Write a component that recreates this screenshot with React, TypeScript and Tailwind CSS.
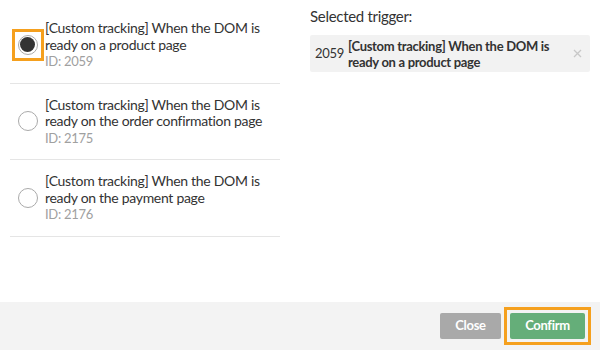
import React from "react";

const triggers = [
  { id: 2059, name: "[Custom tracking] When the DOM is ready on a product page" },
  { id: 2175, name: "[Custom tracking] When the DOM is ready on the order confirmation page" },
  { id: 2176, name: "[Custom tracking] When the DOM is ready on the payment page" },
];

function Radio({ checked }: { checked: boolean }) {
  return (
    <span className="flex h-[20px] w-[20px] shrink-0 items-center justify-center rounded-full border border-[#aaaaaa] bg-white">
      {checked && <span className="h-[15px] w-[15px] rounded-full bg-[#333333]" />}
    </span>
  );
}

export default function App() {
  const selected = triggers[0];

  return (
    <div className="flex h-[350px] w-[600px] flex-col bg-white text-[#333333] font-['Lato',sans-serif] tracking-[-0.3px]">
      <div className="flex flex-1 gap-[30px] px-[10px]">
        {/* Trigger list */}
        <div className="w-[270px] pt-[7px]">
          {triggers.map((t, i) => (
            <div
              key={t.id}
              className="flex items-center border-b border-[#e5e5e5] pt-[13px] pb-[13px]"
            >
              <div className="flex w-[35px] shrink-0 justify-center">
                {i === 0 ? (
                  <span className="flex h-[32px] w-[32px] items-center justify-center border-[3px] border-[#f5a01e]">
                    <Radio checked />
                  </span>
                ) : (
                  <Radio checked={false} />
                )}
              </div>
              <div className="text-[14px] leading-[16.5px]">
                <div>{t.name}</div>
                <div className="text-[13px] text-[#a0a0a0]">ID: {t.id}</div>
              </div>
            </div>
          ))}
        </div>

        {/* Selected */}
        <div className="w-[280px] pt-[7px]">
          <div className="text-[15px] leading-[18px]">Selected trigger:</div>
          <div className="mt-[10px] flex h-[37px] items-center rounded-[2px] bg-[#f2f2f2] pl-[5px] pr-[8px]">
            <span className="mr-[4px] shrink-0 text-[13px]">{selected.id}</span>
            <span className="flex-1 text-[13px] font-bold leading-[16px]">{selected.name}</span>
            <svg width="9" height="9" viewBox="0 0 9 9" className="shrink-0">
              <path d="M1 1L8 8M8 1L1 8" stroke="#c8c8c8" strokeWidth="1.3" />
            </svg>
          </div>
        </div>
      </div>

      {/* Footer */}
      <div className="flex h-[48px] items-center justify-end gap-[3px] bg-[#f3f3f3] pr-[9px]">
        <button className="h-[26px] w-[61px] rounded-[2px] bg-[#a9a9a9] text-[13px] font-bold text-white">
          Close
        </button>
        <span className="flex h-[38px] w-[87px] items-center justify-center border-[3px] border-[#f5a01e]">
          <button className="h-[26px] w-[75px] rounded-[2px] bg-[#65ae79] text-[13px] font-bold text-white">
            Confirm
          </button>
        </span>
      </div>
    </div>
  );
}
